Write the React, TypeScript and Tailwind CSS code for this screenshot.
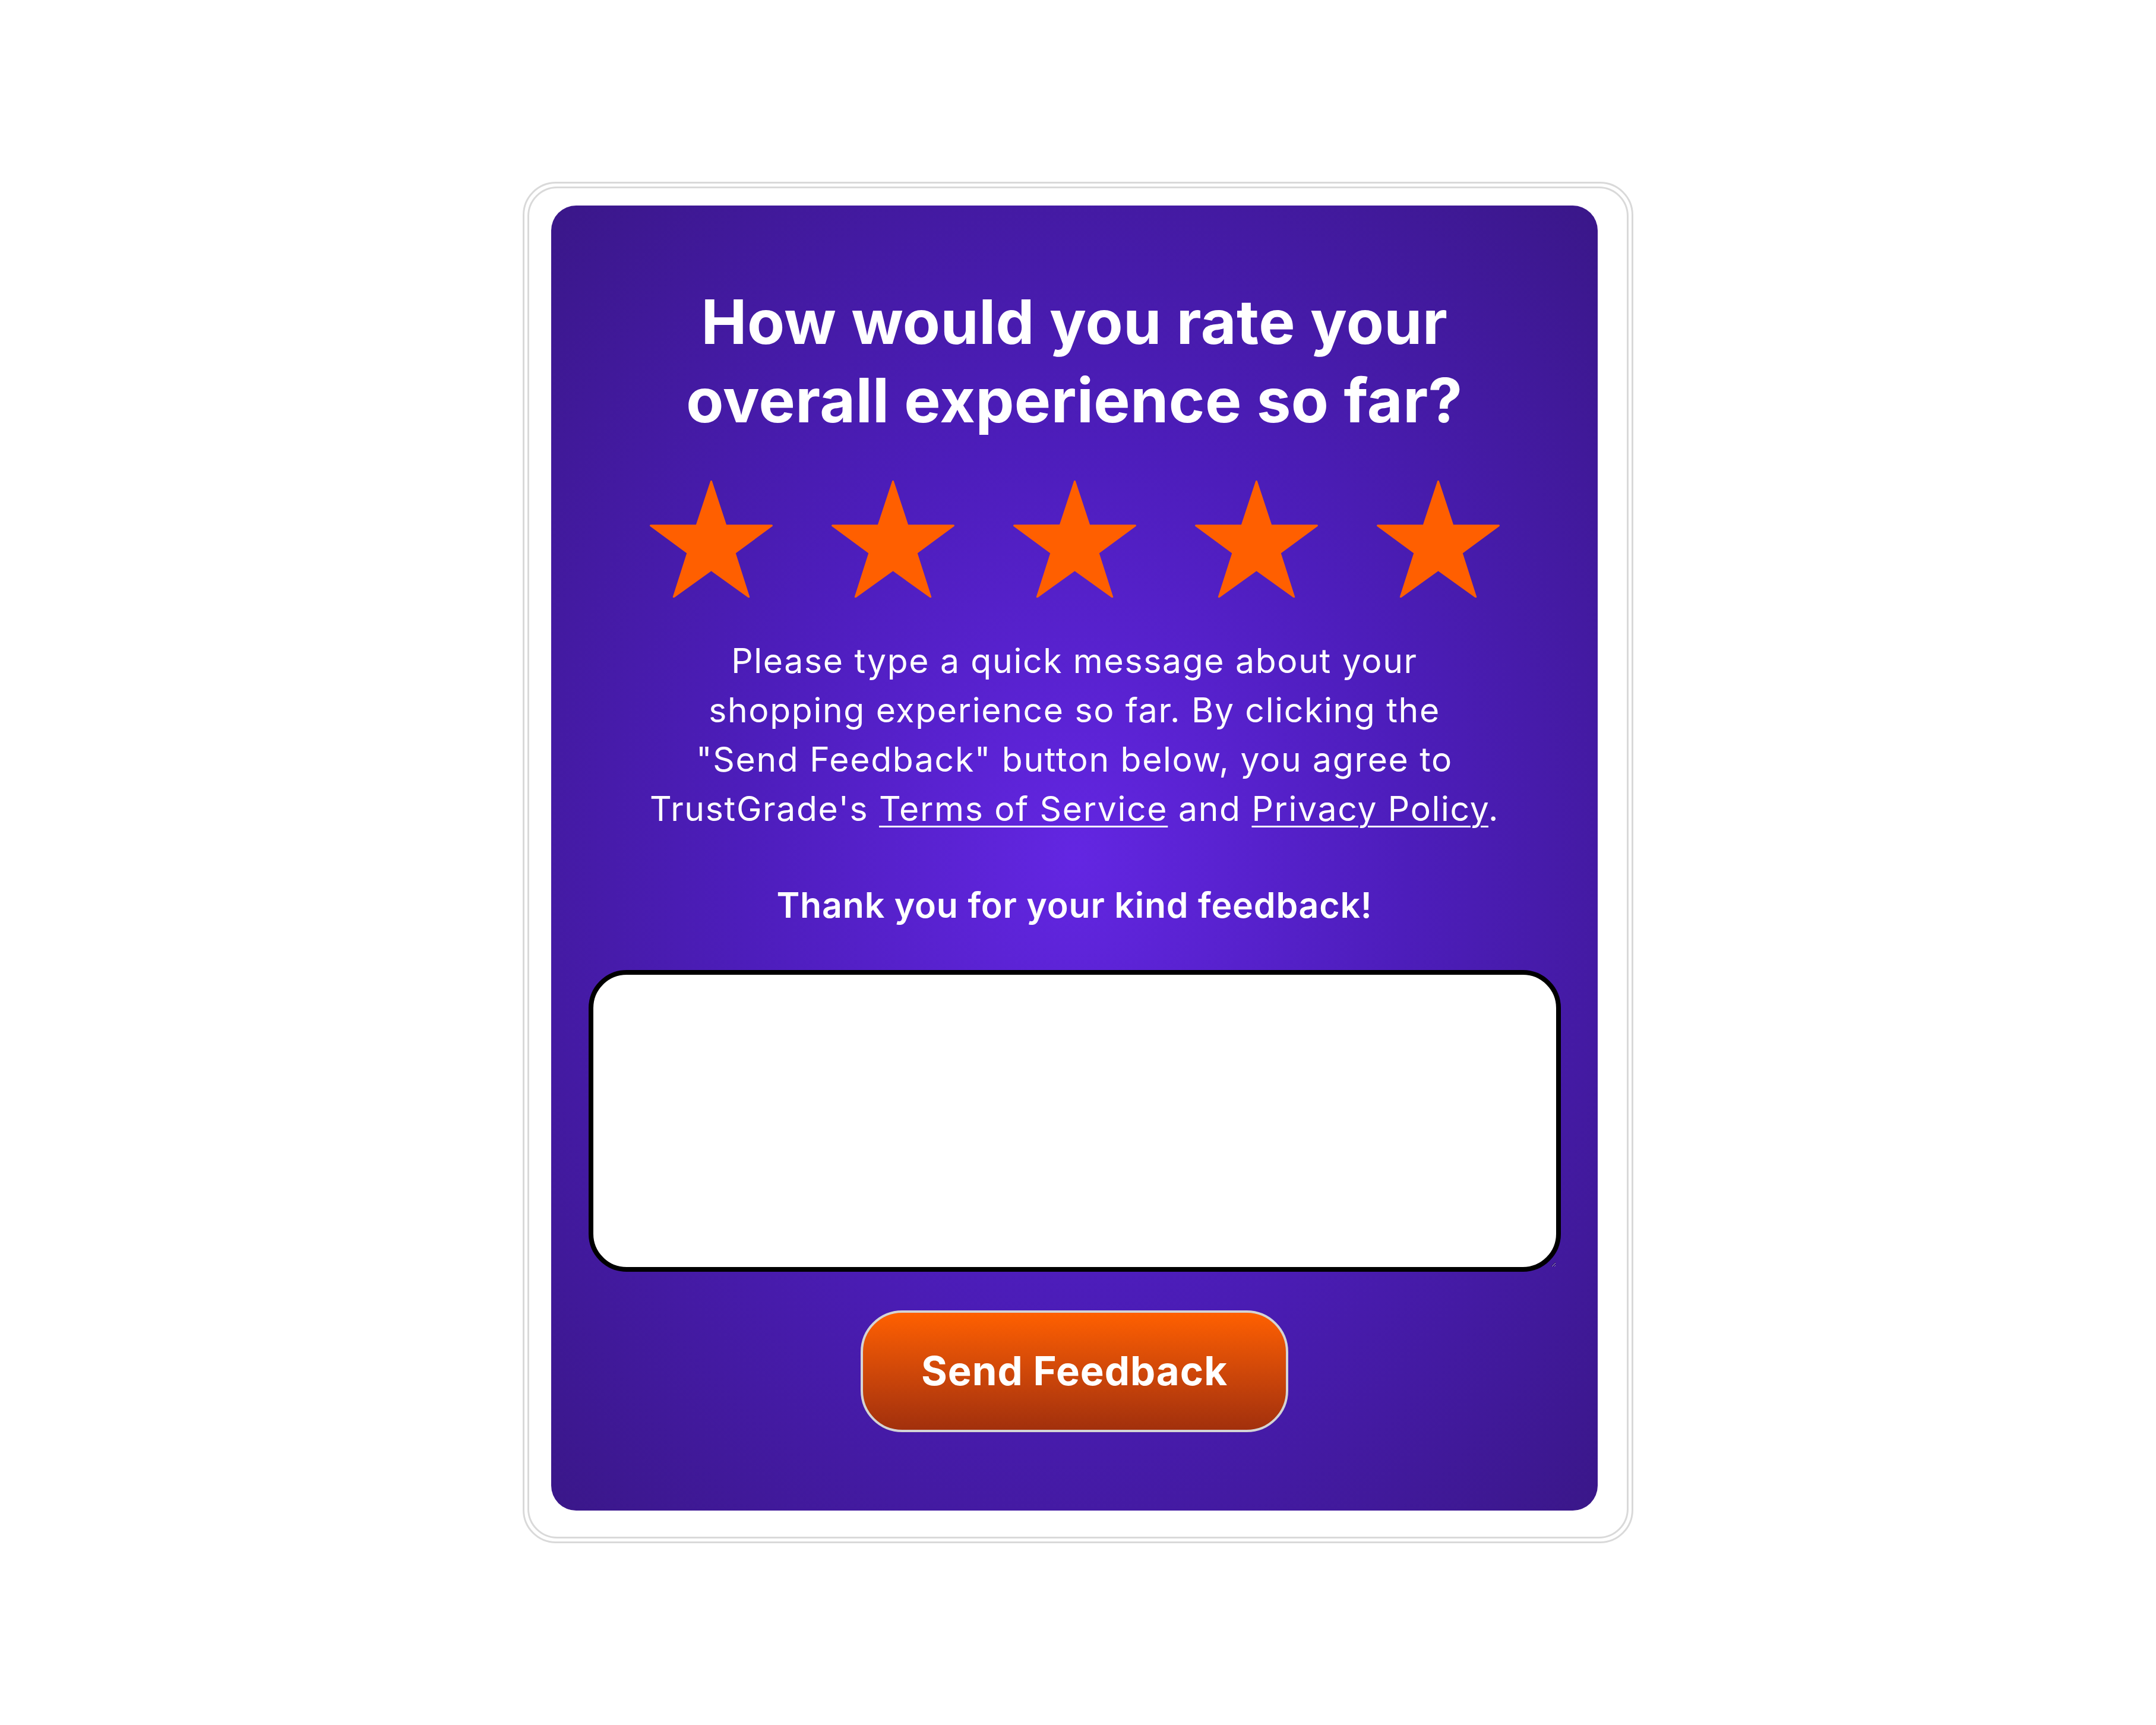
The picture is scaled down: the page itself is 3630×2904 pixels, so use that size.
import { useState } from "react";

const Star = () => (
  <svg width="207" height="197" viewBox="-103.5 -109 207 197" className="block">
    <polygon
      fill="#ff5f00"
      stroke="#ff5f00"
      strokeWidth="3"
      strokeLinejoin="round"
      points="0,-107.5 24.4,-33.6 102,-33.2 39.5,12.8 63.2,86.9 0,41.6 -63.2,86.9 -39.5,12.8 -102,-33.2 -24.4,-33.6"
    />
  </svg>
);

const FeedbackCard = () => {
  const [message, setMessage] = useState("");

  return (
    <div className="rounded-[56px] border-[3px] border-[#d9d9d9] bg-white p-[5px]">
      <div className="rounded-[50px] border-[3px] border-[#d9d9d9] pt-[29px] pl-[37px] pr-[49px] pb-[44px]">
        <div className="flex h-[2197px] w-[1762px] flex-col items-center rounded-[42px] bg-[radial-gradient(ellipse_at_center,#6326e2_0%,#4d1dbb_45%,#3a1789_100%)] px-[62px] pt-[130px] text-white">
          <h1 className="text-center text-[103px] font-bold leading-[132px] tracking-[0.5px]">
            How would you rate your
            <br />
            overall experience so far?
          </h1>

          <div className="mt-[69px] flex gap-[99px]">
            {[1, 2, 3, 4, 5].map((i) => (
              <Star key={i} />
            ))}
          </div>

          <p className="mt-[65px] text-center text-[57px] leading-[83px] tracking-[1.7px]">
            Please type a quick message about your
            <br />
            shopping experience so far. By clicking the
            <br />
            "Send Feedback" button below, you agree to
            <br />
            TrustGrade's{" "}
            <a href="#" className="underline decoration-[3px] underline-offset-[8px]">
              Terms of Service
            </a>{" "}
            and{" "}
            <a href="#" className="underline decoration-[3px] underline-offset-[8px]">
              Privacy Policy
            </a>
            .
          </p>

          <p className="mt-[79px] text-center text-[59px] font-semibold leading-[83px] tracking-[0.8px]">
            Thank you for your kind feedback!
          </p>

          <textarea
            value={message}
            onChange={(e) => setMessage(e.target.value)}
            className="mt-[68px] h-[508px] w-[1637px] resize rounded-[64px] border-[8px] border-black bg-white p-[40px] text-[50px] text-black outline-none"
          />

          <button className="mt-[65px] h-[205px] w-[720px] rounded-[70px] border-[4px] border-[#d4d4d4] bg-gradient-to-b from-[#ff6000] to-[#a2300c] text-[67px] font-bold tracking-[1px] text-white">
            Send Feedback
          </button>
        </div>
      </div>
    </div>
  );
};

export default function App() {
  return (
    <div className="flex min-h-screen items-center justify-center bg-white font-['Inter',sans-serif]">
      <FeedbackCard />
    </div>
  );
}
